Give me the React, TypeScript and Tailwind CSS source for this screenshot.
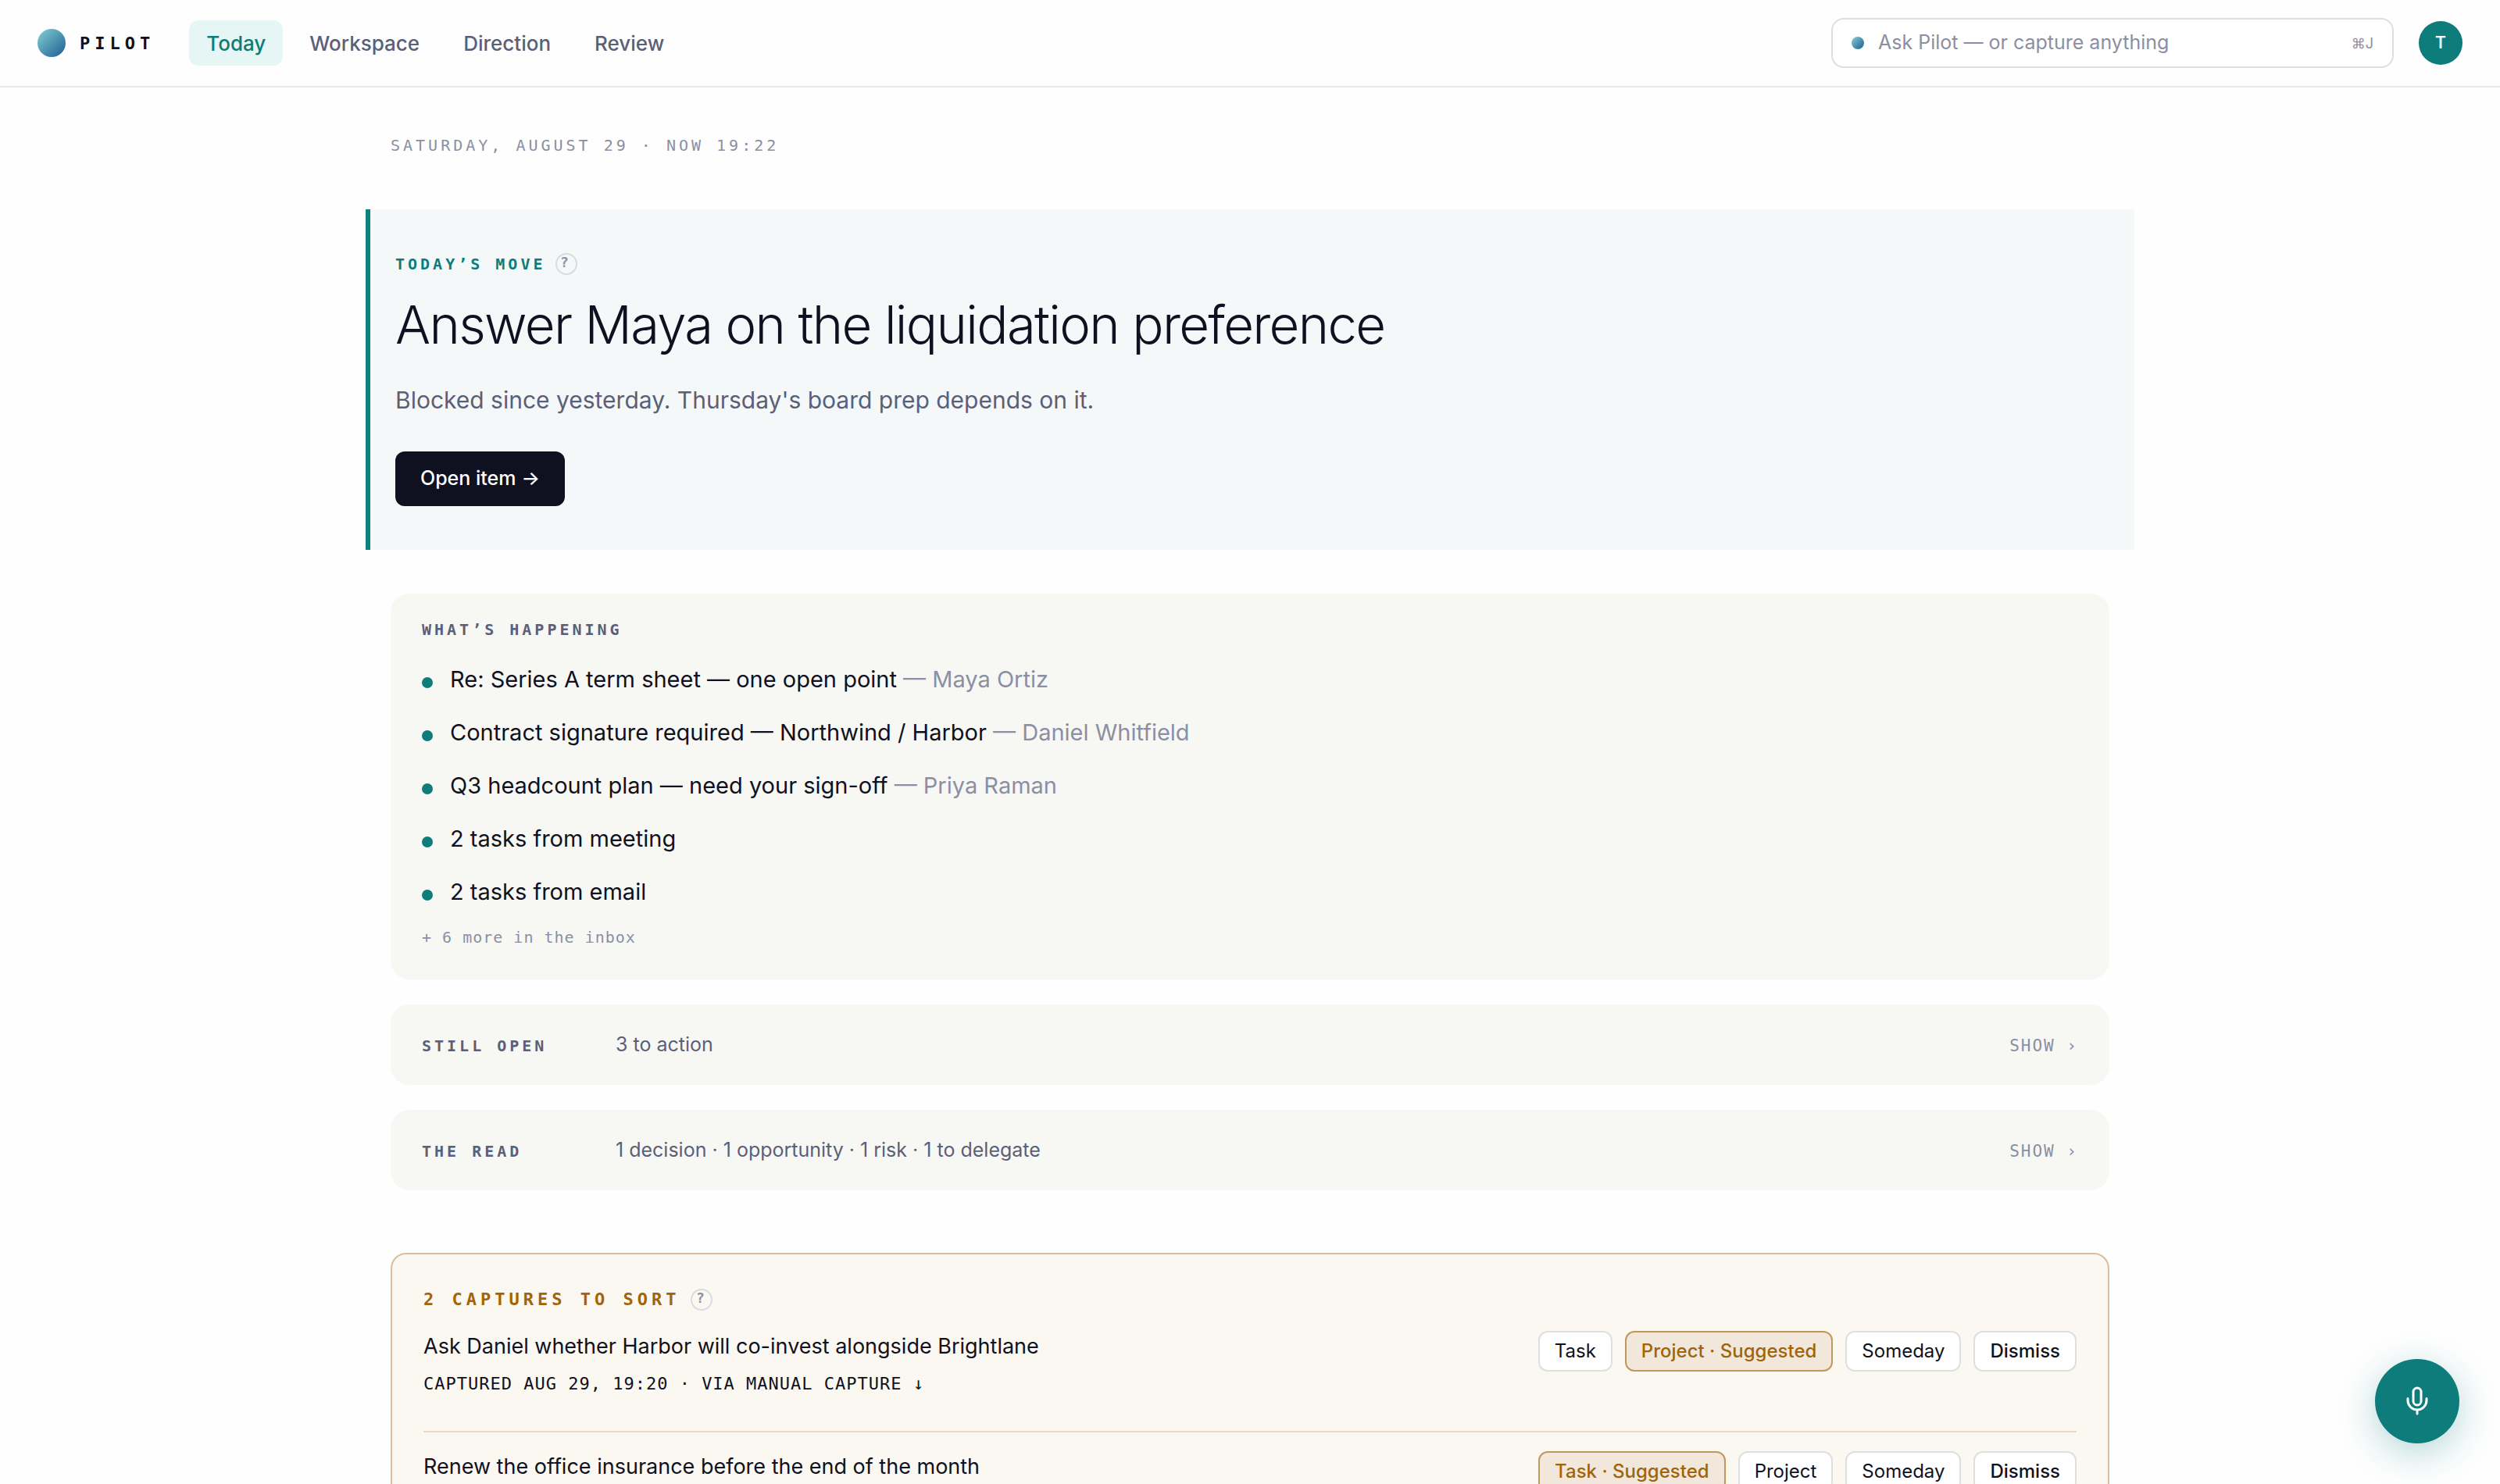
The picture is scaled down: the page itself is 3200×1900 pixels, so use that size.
import clsx from 'clsx';

const MONO = "font-['DejaVu_Sans_Mono',monospace]";

const tabs = ['Today', 'Workspace', 'Direction', 'Review'];

const happening = [
  { text: 'Re: Series A term sheet — one open point', who: 'Maya Ortiz' },
  {
    text: 'Contract signature required — Northwind / Harbor',
    who: 'Daniel Whitfield',
  },
  { text: 'Q3 headcount plan — need your sign-off', who: 'Priya Raman' },
  { text: '2 tasks from meeting' },
  { text: '2 tasks from email' },
];

const captures = [
  {
    title: 'Ask Daniel whether Harbor will co-invest alongside Brightlane',
    meta: 'Captured Aug 29, 19:20 · via manual capture ↓',
    suggested: 'Project',
  },
  {
    title: 'Renew the office insurance before the end of the month',
    suggested: 'Task',
  },
];

function Help({ label }: { label: string }) {
  return (
    <button
      type="button"
      aria-label={label}
      className={clsx(
        MONO,
        'flex size-7 items-center justify-center rounded-full border-2 border-[#d9dcde] pr-1 pb-1 text-[18px] leading-none font-bold text-[#8b8fa3]'
      )}
    >
      ?
    </button>
  );
}

function Header() {
  return (
    <header className="flex h-28 items-center border-b-2 border-[#e8e9e9] px-12">
      <a href="#" className="flex items-center gap-[18px]">
        <span className="size-9 rounded-full bg-linear-135 from-[#86d3d3] to-[#1d5c92]" />
        <span
          className={clsx(MONO, 'text-[22px] font-bold tracking-[6px] text-[#0f1120]')}
        >
          PILOT
        </span>
      </a>
      <nav className="ml-11 flex gap-3">
        {tabs.map((tab) => (
          <a
            key={tab}
            href="#"
            className={clsx(
              'flex h-[58px] items-center rounded-xl px-[22px] text-[26px] font-medium',
              tab === 'Today' ? 'bg-[#e6f6f4] text-[#0d7c7a]' : 'text-[#5b5f78]'
            )}
          >
            {tab}
          </a>
        ))}
      </nav>
      <label className="ml-auto flex h-16 w-[720px] items-center rounded-2xl border-2 border-[#dcdedf] bg-white px-6">
        <span className="size-4 rounded-full bg-linear-135 from-[#86d3d3] to-[#1d5c92]" />
        <input
          type="text"
          aria-label="Ask Pilot"
          placeholder="Ask Pilot — or capture anything"
          className="ml-[18px] min-w-0 flex-1 bg-transparent text-[25px] outline-none placeholder:text-[#8b8fa3]"
        />
        <kbd className="font-[Inter,sans-serif] text-[18px] text-[#8b8fa3]">⌘J</kbd>
      </label>
      <button
        type="button"
        className="ml-8 size-14 rounded-full bg-[#0d7c7a] text-[21px] font-semibold text-white"
      >
        T
      </button>
    </header>
  );
}

function Move() {
  return (
    <section className="-mx-8 mt-[66px] border-l-6 border-[#0d837c] bg-[#f4f8f9] py-14 pl-8">
      <div className="flex items-center gap-3">
        <h2 className={clsx(MONO, 'text-[20px] leading-7 font-bold tracking-[4px] text-[#0d7c7a]')}>
          TODAY’S MOVE
        </h2>
        <Help label="About today's move" />
      </div>
      <h1 className="mt-[26px] text-[67px] leading-[76px] font-light tracking-tight text-[#0f1120]">
        Answer Maya on the liquidation preference
      </h1>
      <p className="mt-9 text-[30px] leading-11 text-[#5b5f78]">
        Blocked since yesterday. Thursday's board prep depends on it.
      </p>
      <button
        type="button"
        className="mt-11 flex h-[70px] items-center rounded-xl bg-[#0f1120] px-8 text-[25px] font-medium text-white"
      >
        Open item →
      </button>
    </section>
  );
}

function Happening() {
  return (
    <section className="mt-14 rounded-3xl bg-[#f7f8f4] px-10 pt-8 pb-10">
      <h2 className={clsx(MONO, 'text-[20px] leading-7 font-bold tracking-[4px] text-[#5b5f78]')}>
        WHAT’S HAPPENING
      </h2>
      <ul className="mt-4">
        {happening.map((item) => (
          <li key={item.text} className="flex h-[68px] items-center gap-[22px] text-[29px]">
            <span className="mt-2 size-[14px] rounded-full bg-[#0d7c7a]" />
            <a href="#" className="text-[#0f1120]">
              {item.text}
              {item.who && <span className="text-[#8b8fa3]"> — {item.who}</span>}
            </a>
          </li>
        ))}
      </ul>
      <a
        href="#"
        className={clsx(MONO, 'mt-[10px] block text-[20px] leading-7 tracking-[1px] text-[#8b8fa3]')}
      >
        + 6 more in the inbox
      </a>
    </section>
  );
}

function Fold({ title, summary }: { title: string; summary: string }) {
  return (
    <section className="mt-8 flex min-h-[103px] items-center rounded-3xl bg-[#f7f8f4] px-10">
      <div className="flex w-full items-baseline">
        <h2 className={clsx(MONO, 'w-62 text-[20px] font-bold tracking-[4px] text-[#5b5f78]')}>
          {title}
        </h2>
        <p className="text-[25px] text-[#5b5f78]">{summary}</p>
        <button
          type="button"
          className={clsx(MONO, 'ml-auto text-[21px] tracking-[2px] text-[#8b8fa3]')}
        >
          SHOW ›
        </button>
      </div>
    </section>
  );
}

function Chip({ name, suggested }: { name: string; suggested: boolean }) {
  return (
    <button
      type="button"
      className={clsx(
        'h-13 rounded-xl border-2 px-[19px] text-[24px]',
        suggested
          ? 'border-[#c2985a] bg-[#f1e8db] font-medium text-[#a1640a]'
          : 'border-[#dedfdf] bg-white text-[#0f1120]',
        name === 'Dismiss' && 'font-medium'
      )}
    >
      {suggested ? `${name} · Suggested` : name}
    </button>
  );
}

function Captures() {
  return (
    <section className="mt-20 rounded-[20px] border-2 border-[#d8bf98] bg-[#fbf8f2] px-10 pt-11 pb-6">
      <div className="flex items-center gap-[14px]">
        <h2 className={clsx(MONO, 'text-[22px] leading-7 font-bold tracking-[5px] text-[#a1640a]')}>
          2 CAPTURES TO SORT
        </h2>
        <Help label="About captures" />
      </div>
      <ul className="mt-[2px] divide-y-2 divide-[#ebd8c6]">
        {captures.map((item) => (
          <li key={item.title} className="flex items-start justify-between pt-5 pb-[42px]">
            <div>
              <p className="text-[27px] leading-12 text-[#0f1120]">{item.title}</p>
              {item.meta && (
                <button
                  type="button"
                  className={clsx(
                    MONO,
                    'mt-[6px] block text-[22px] leading-9 tracking-[1px] text-[#0f1120] uppercase'
                  )}
                >
                  {item.meta}
                </button>
              )}
            </div>
            <div className="mt-1 flex gap-4">
              {['Task', 'Project', 'Someday', 'Dismiss'].map((name) => (
                <Chip key={name} name={name} suggested={name === item.suggested} />
              ))}
            </div>
          </li>
        ))}
      </ul>
    </section>
  );
}

export default function App() {
  return (
    <div className="h-screen overflow-hidden bg-[#fefefe] font-[Inter,sans-serif]">
      <Header />
      <main className="mx-auto max-w-[2200px] pt-[58px]">
        <p className={clsx(MONO, 'text-[20px] leading-8 tracking-[4px] text-[#8b8fa3]')}>
          SATURDAY, AUGUST 29 · NOW 19:22
        </p>
        <Move />
        <Happening />
        <Fold title="STILL OPEN" summary="3 to action" />
        <Fold
          title="THE READ"
          summary="1 decision · 1 opportunity · 1 risk · 1 to delegate"
        />
        <Captures />
      </main>
      <button
        type="button"
        aria-label="Record"
        className="fixed right-13 bottom-13 flex size-27 items-center justify-center rounded-full bg-[#0d7c7a] text-white shadow-[0_12px_48px_rgba(13,124,122,0.3)]"
      >
        <svg
          width="36"
          height="36"
          viewBox="0 0 36 36"
          fill="none"
          stroke="currentColor"
          strokeWidth="3"
          strokeLinecap="round"
          className="overflow-visible"
        >
          <rect x="13" y="1" width="10" height="22" rx="5" />
          <path d="M6 14.5V17a12 12 0 0 0 24 0v-2.5M18 29v5" />
        </svg>
      </button>
    </div>
  );
}
